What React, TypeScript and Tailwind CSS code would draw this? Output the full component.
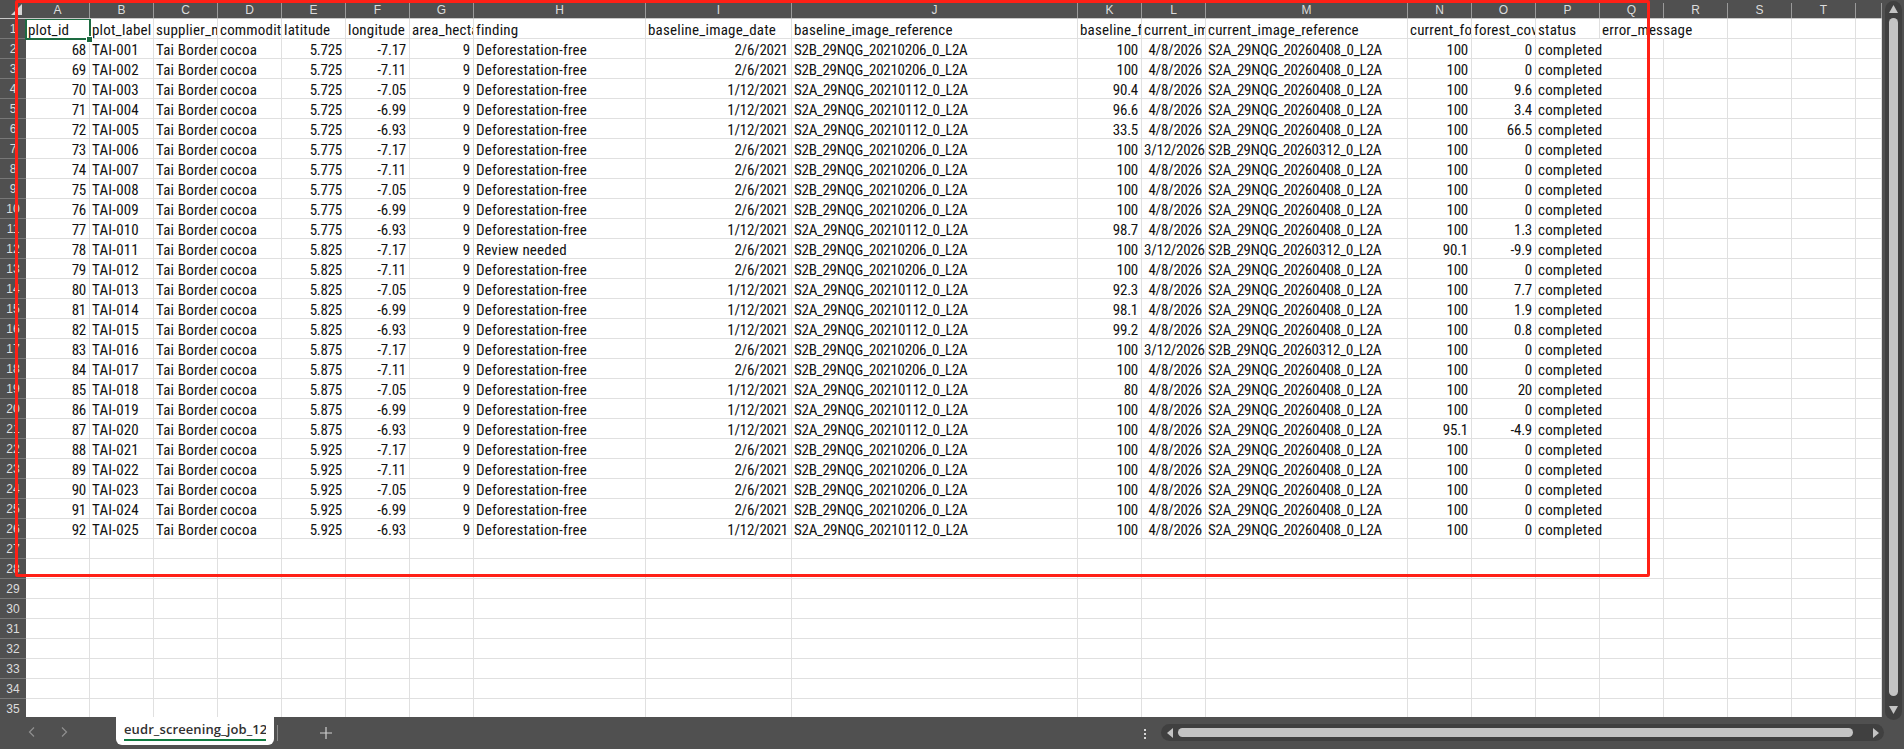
const columns = [
  { name: "A", width: 64 }, { name: "B", width: 64 }, { name: "C", width: 64 }, { name: "D", width: 64 },
  { name: "E", width: 64 }, { name: "F", width: 64 }, { name: "G", width: 64 }, { name: "H", width: 172 },
  { name: "I", width: 146 }, { name: "J", width: 286 }, { name: "K", width: 64 }, { name: "L", width: 64 },
  { name: "M", width: 202 }, { name: "N", width: 64 }, { name: "O", width: 64 }, { name: "P", width: 64 },
  { name: "Q", width: 64 }, { name: "R", width: 64 }, { name: "S", width: 64 }, { name: "T", width: 64 },
  { name: "", width: 26 },
];

const headers = ["plot_id", "plot_label", "supplier_name", "commodity", "latitude", "longitude", "area_hectares", "finding", "baseline_image_date", "baseline_image_reference", "baseline_forest", "current_image", "current_image_reference", "current_forest", "forest_cover", "status", "error_message"];

const rightAligned = [0, 4, 5, 6, 8, 10, 11, 13, 14];
// columns holding mostly digits render tighter in the reference font
const digitCols = [0, 4, 5, 6, 8, 9, 10, 11, 12, 13, 14];

const B = "S2B_29NQG_20210206_0_L2A";
const A = "S2A_29NQG_20210112_0_L2A";
const CA = "S2A_29NQG_20260408_0_L2A";
const CB = "S2B_29NQG_20260312_0_L2A";

// lat, lon, baseline date, baseline ref, baseline %, current date, current ref, current %, change
const data: [string, string, string, string, string, string, string, string, string][] = [
  ["5.725", "-7.17", "2/6/2021", B, "100", "4/8/2026", CA, "100", "0"],
  ["5.725", "-7.11", "2/6/2021", B, "100", "4/8/2026", CA, "100", "0"],
  ["5.725", "-7.05", "1/12/2021", A, "90.4", "4/8/2026", CA, "100", "9.6"],
  ["5.725", "-6.99", "1/12/2021", A, "96.6", "4/8/2026", CA, "100", "3.4"],
  ["5.725", "-6.93", "1/12/2021", A, "33.5", "4/8/2026", CA, "100", "66.5"],
  ["5.775", "-7.17", "2/6/2021", B, "100", "3/12/2026", CB, "100", "0"],
  ["5.775", "-7.11", "2/6/2021", B, "100", "4/8/2026", CA, "100", "0"],
  ["5.775", "-7.05", "2/6/2021", B, "100", "4/8/2026", CA, "100", "0"],
  ["5.775", "-6.99", "2/6/2021", B, "100", "4/8/2026", CA, "100", "0"],
  ["5.775", "-6.93", "1/12/2021", A, "98.7", "4/8/2026", CA, "100", "1.3"],
  ["5.825", "-7.17", "2/6/2021", B, "100", "3/12/2026", CB, "90.1", "-9.9"],
  ["5.825", "-7.11", "2/6/2021", B, "100", "4/8/2026", CA, "100", "0"],
  ["5.825", "-7.05", "1/12/2021", A, "92.3", "4/8/2026", CA, "100", "7.7"],
  ["5.825", "-6.99", "1/12/2021", A, "98.1", "4/8/2026", CA, "100", "1.9"],
  ["5.825", "-6.93", "1/12/2021", A, "99.2", "4/8/2026", CA, "100", "0.8"],
  ["5.875", "-7.17", "2/6/2021", B, "100", "3/12/2026", CB, "100", "0"],
  ["5.875", "-7.11", "2/6/2021", B, "100", "4/8/2026", CA, "100", "0"],
  ["5.875", "-7.05", "1/12/2021", A, "80", "4/8/2026", CA, "100", "20"],
  ["5.875", "-6.99", "1/12/2021", A, "100", "4/8/2026", CA, "100", "0"],
  ["5.875", "-6.93", "1/12/2021", A, "100", "4/8/2026", CA, "95.1", "-4.9"],
  ["5.925", "-7.17", "2/6/2021", B, "100", "4/8/2026", CA, "100", "0"],
  ["5.925", "-7.11", "2/6/2021", B, "100", "4/8/2026", CA, "100", "0"],
  ["5.925", "-7.05", "2/6/2021", B, "100", "4/8/2026", CA, "100", "0"],
  ["5.925", "-6.99", "2/6/2021", B, "100", "4/8/2026", CA, "100", "0"],
  ["5.925", "-6.93", "1/12/2021", A, "100", "4/8/2026", CA, "100", "0"],
];

const rows: string[][] = [
  headers,
  ...data.map((d, i) => [
    String(68 + i),
    `TAI-${String(i + 1).padStart(3, "0")}`,
    "Tai Border Cooperative",
    "cocoa",
    d[0],
    d[1],
    "9",
    i === 10 ? "Review needed" : "Deforestation-free",
    d[2],
    d[3],
    d[4],
    d[5],
    d[6],
    d[7],
    d[8],
    "completed",
    "",
  ]),
];

function Cell({ text, width, right, digits, spill }: { text: string; width: number; right: boolean; digits: boolean; spill: boolean }) {
  return (
    <div
      className={`h-5 shrink-0 whitespace-nowrap border-r border-b border-[#e0e0e0] pt-[3px] pr-[3px] pl-[2px] text-[15px] leading-[16px] text-[#111111] ${right ? "text-right" : "text-left"} ${digits ? "tracking-[-0.25px]" : "tracking-[0.2px]"} ${spill ? "overflow-visible border-r-transparent" : "overflow-hidden"}`}
      style={{ width }}
    >
      {text}
    </div>
  );
}

export default function App() {
  return (
    <div className="relative flex h-[749px] w-[1904px] flex-col overflow-hidden bg-[#505050] font-['Liberation_Sans_Narrow','Roboto_Condensed','Liberation_Sans',sans-serif]">
      <div className="flex min-h-0 flex-1">
        <div className="flex min-w-0 flex-1 flex-col">
          <div className="flex h-[19px] shrink-0 border-b border-[#c8c8c8] bg-[#505050] font-['Liberation_Sans',sans-serif]">
            <div className="relative w-[26px] shrink-0">
              <div className="absolute right-[4px] bottom-[3px] h-0 w-0 border-b-[11px] border-l-[11px] border-b-[#d6d6d6] border-l-transparent" />
            </div>
            {columns.map((c, i) => (
              <div
                key={i}
                className="mt-[3px] shrink-0 border-r border-[#9a9a9a] text-center text-xs leading-[14px] text-[#dcdcdc]"
                style={{ width: c.width }}
              >
                {c.name}
              </div>
            ))}
          </div>
          <div className="flex min-h-0 flex-1 overflow-hidden">
            <div className="w-[26px] shrink-0 font-['Liberation_Sans',sans-serif]">
              {Array.from({ length: 35 }, (_, i) => (
                <div key={i} className="h-5 border-b border-[#777777] text-center text-xs leading-[21px] text-[#dcdcdc]">
                  {i + 1}
                </div>
              ))}
            </div>
            <div className="relative min-w-0 flex-1 bg-white">
              {Array.from({ length: 35 }, (_, r) => (
                <div key={r} className="flex">
                  {columns.map((c, i) => {
                    const text = rows[r]?.[i] ?? "";
                    return (
                      <Cell
                        key={i}
                        text={text}
                        width={c.width}
                        right={r > 0 && rightAligned.includes(i)}
                        digits={r > 0 && digitCols.includes(i)}
                        spill={(i === 15 && r > 0 && r < 26) || (i === 16 && r === 0)}
                      />
                    );
                  })}
                </div>
              ))}
              <div className="absolute -top-px -left-px h-[22px] w-[66px] border-2 border-[#1d6b41]" />
              <div className="absolute top-[17px] left-[60px] h-[7px] w-[7px] border border-white bg-[#1d6b41]" />
            </div>
          </div>
        </div>
        <div className="relative z-10 w-[22px] shrink-0 bg-[#505050]">
          <div className="mt-px ml-[3px] flex h-[719px] w-[17px] flex-col items-center rounded-full bg-[#404040] pt-1 pb-[6px]">
            <svg width="9" height="8" viewBox="0 0 9 8"><path d="M4.5 0 9 8H0z" fill="#c4c4c4" /></svg>
            <div className="mt-[5px] w-[9px] flex-1 rounded-full bg-[#c4c4c4]" />
            <svg className="mt-[10px]" width="9" height="8" viewBox="0 0 9 8"><path d="M4.5 8 9 0H0z" fill="#c4c4c4" /></svg>
          </div>
        </div>
      </div>
      <div className="flex h-8 shrink-0 items-start bg-[#505050]">
        <div className="flex h-7 w-[116px] shrink-0 items-center pl-7 text-[#909090]">
          <svg className="mt-[2px]" width="7" height="10" viewBox="0 0 7 10" fill="none" stroke="currentColor" strokeWidth="1.2"><path d="M6 .5 1.5 5 6 9.5" /></svg>
          <svg className="mt-[2px] ml-[26px]" width="7" height="10" viewBox="0 0 7 10" fill="none" stroke="currentColor" strokeWidth="1.2"><path d="M1 .5 5.5 5 1 9.5" /></svg>
        </div>
        <div className="h-7 w-[158px] shrink-0 rounded-b-md bg-white px-2 pt-[3px] font-['Open_Sans','Liberation_Sans',sans-serif] text-[13px] leading-[19px] font-semibold tracking-[0.1px] text-[#303030]">
          <div className="overflow-hidden whitespace-nowrap border-b-2 border-[#107c41]">eudr_screening_job_12</div>
        </div>
        <div className="mt-2 ml-[3px] h-4 w-px bg-[#8a8a8a]" />
        <svg className="mt-[10px] ml-[42px]" width="12" height="12" viewBox="0 0 12 12" stroke="#d0d0d0" strokeWidth="1.2"><path d="M6 0v12M0 6h12" /></svg>
        <div className="mt-3 ml-[812px] flex flex-col gap-[2px]">
          <div className="h-[2px] w-[2px] bg-[#d6d6d6]" />
          <div className="h-[2px] w-[2px] bg-[#d6d6d6]" />
          <div className="h-[2px] w-[2px] bg-[#d6d6d6]" />
        </div>
        <div className="mt-[7px] ml-[15px] flex h-[17px] w-[723px] items-center rounded-full bg-[#404040] pr-[5px] pl-[6px]">
          <svg width="6" height="10" viewBox="0 0 6 10"><path d="M0 5 6 0v10z" fill="#c4c4c4" /></svg>
          <div className="ml-[5px] h-[9px] flex-1 rounded-full bg-[#c4c4c4]" />
          <svg className="ml-5" width="6" height="10" viewBox="0 0 6 10"><path d="M6 5 0 0v10z" fill="#c4c4c4" /></svg>
        </div>
      </div>
      <div className="pointer-events-none absolute top-0 left-[15px] h-[577px] w-[1635px] rounded-[2px] border-[3px] border-[#ff2016]" />
    </div>
  );
}
